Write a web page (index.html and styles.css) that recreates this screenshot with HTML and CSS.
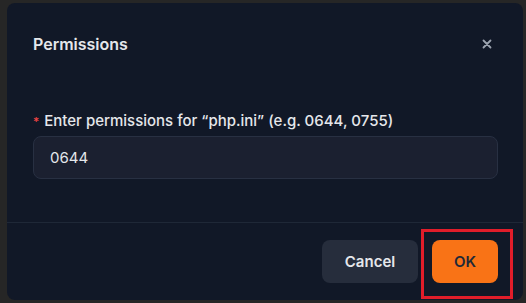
FILE: index.html
```html
<!DOCTYPE html>
<html>
<head>
<meta charset="utf-8">
<link rel="stylesheet" href="styles.css">
</head>
<body>
<div class="dialog">
  <div class="header">
    <div class="title">Permissions</div>
    <svg class="close" width="10" height="10" viewBox="0 0 10 10"><path d="M1.5 1.5 L8.5 8.5 M8.5 1.5 L1.5 8.5" stroke="#9ca3af" stroke-width="1.8" stroke-linecap="round"/></svg>
  </div>
  <div class="body">
    <label class="label"><span class="req">*</span>Enter permissions for “php.ini” (e.g. 0644, 0755)</label>
    <div class="input">0644</div>
  </div>
  <div class="footer">
    <button class="btn cancel">Cancel</button>
    <button class="btn ok">OK</button>
  </div>
  <div class="highlight"></div>
</div>
</body>
</html>
```
FILE: styles.css
```css
html, body {
  margin: 0;
  padding: 0;
  background: #262626;
  width: 526px;
  height: 303px;
  overflow: hidden;
}
body {
  font-family: Inter, "Noto Sans", sans-serif;
  padding: 3px 0 0 7px;
  box-sizing: border-box;
}
.dialog {
  position: relative;
  width: 516px;
  height: 297px;
  background: #111827;
  border-radius: 8px;
  display: flex;
  flex-direction: column;
  box-sizing: border-box;
}
.header {
  display: flex;
  align-items: center;
  justify-content: space-between;
  padding: 31px 31px 0 26px;
  height: 20px;
  box-sizing: content-box;
}
.title {
  font-size: 16px;
  font-weight: 600;
  color: #e5e7eb;
  line-height: 20px;
}
.close { display: block; }
.body {
  padding: 57px 25px 0 26px;
  display: flex;
  flex-direction: column;
  gap: 4px;
  height: 111px;
  box-sizing: content-box;
}
.label {
  font-size: 15px;
  line-height: 20px;
  color: #e5e7eb;
  font-weight: 500;
}
.req {
  color: #ef4444;
  margin-right: 5px;
  font-size: 12px;
}
.input {
  height: 43px;
  box-sizing: border-box;
  border: 1px solid #283042;
  background: #1b2030;
  border-radius: 8px;
  padding: 0 16px;
  display: flex;
  align-items: center;
  font-size: 15px;
  color: #e5e7eb;
}
.footer {
  border-top: 1px solid #1f2837;
  padding: 17px 25px 0 0;
  display: flex;
  justify-content: flex-end;
  gap: 14px;
}
.btn {
  height: 43px;
  border: none;
  border-radius: 8px;
  font-family: Inter, "Noto Sans", sans-serif;
  font-size: 15px;
  font-weight: 600;
}
.cancel {
  width: 96px;
  background: #262d3c;
  color: #e5e7eb;
}
.ok {
  width: 66px;
  background: #f97316;
  color: #1f2937;
}
.highlight {
  position: absolute;
  left: 414px;
  top: 226px;
  width: 92px;
  height: 70px;
  box-sizing: border-box;
  border: 3px solid #e11d2a;
}
```
